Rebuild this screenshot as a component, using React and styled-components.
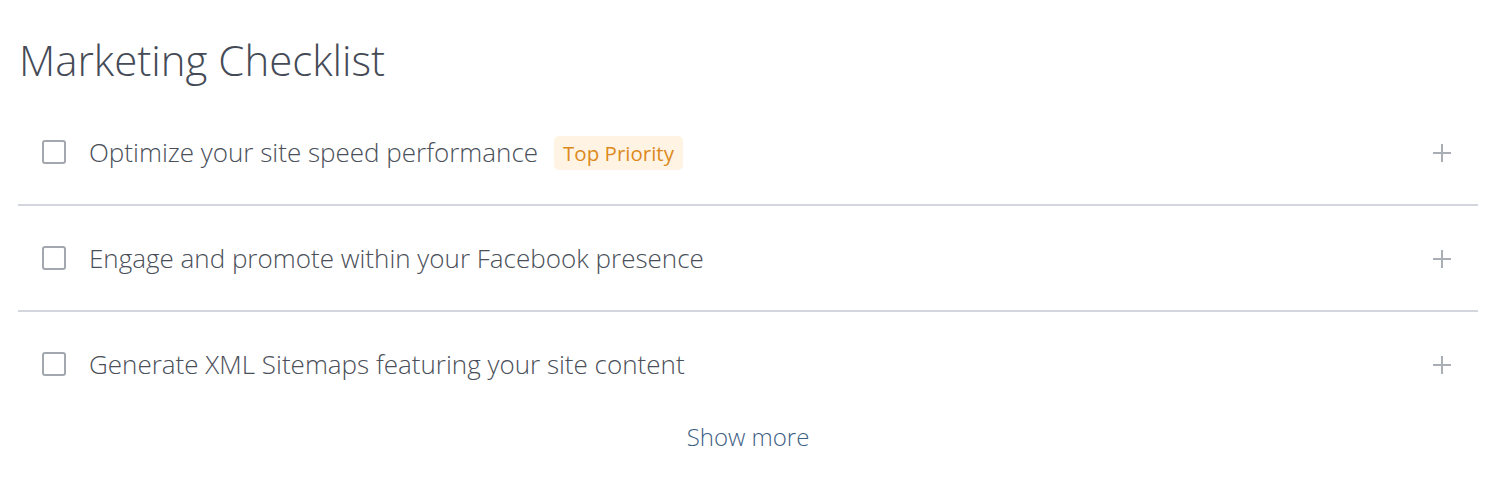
import styled, { createGlobalStyle } from "styled-components";

const items = [
  { id: 1, title: "Optimize your site speed performance", badge: "Top Priority" },
  { id: 2, title: "Engage and promote within your Facebook presence" },
  { id: 3, title: "Generate XML Sitemaps featuring your site content" },
];

export default function App() {
  return (
    <>
      <GlobalStyle />
      <Wrapper>
        <Title>Marketing Checklist</Title>
        <List>
          {items.map((item) => (
            <Row key={item.id}>
              <Checkbox type="checkbox" />
              <Label>{item.title}</Label>
              {item.badge && <Badge>{item.badge}</Badge>}
              <Plus aria-label="expand">
                <svg width="20" height="20" viewBox="0 0 20 20">
                  <path d="M10 1v18M1 10h18" stroke="#a9adb4" strokeWidth="2" />
                </svg>
              </Plus>
            </Row>
          ))}
        </List>
        <ShowMore>Show more</ShowMore>
      </Wrapper>
    </>
  );
}

const GlobalStyle = createGlobalStyle`
  body {
    margin: 0;
    background: #fff;
    font-family: "Open Sans", "Noto Sans", sans-serif;
  }
`;

const Wrapper = styled.div`
  padding: 0 18px;
`;

const Title = styled.h1`
  margin: 0;
  padding: 31px 0 0 1px;
  height: 69px;
  font-size: 42px;
  font-weight: 300;
  line-height: 57px;
  color: #454b56;
`;

const List = styled.div`
  display: flex;
  flex-direction: column;
`;

const Row = styled.div`
  display: flex;
  align-items: center;
  height: 104px;
  padding: 0 24px;
  border-bottom: 2px solid #d4d6dd;
  &:last-child {
    border-bottom: none;
  }
`;

const Checkbox = styled.input`
  appearance: none;
  margin: 0 23px 0 0;
  width: 24px;
  height: 24px;
  border: 2px solid #a3a7ae;
  border-radius: 3px;
  box-sizing: border-box;
  flex-shrink: 0;
`;

const Label = styled.div`
  font-size: 26px;
  font-weight: 300;
  line-height: 34px;
  color: #4a4f59;
`;

const Badge = styled.span`
  margin-left: 16px;
  margin-top: 1px;
  padding: 2px 9px;
  border-radius: 5px;
  background: #fff4e4;
  color: #dc8a20;
  font-size: 20.5px;
  font-weight: 400;
  line-height: 30px;
`;

const Plus = styled.div`
  display: flex;
  margin: 2px 2px 0 auto;
`;

const ShowMore = styled.div`
  text-align: center;
  margin-top: 4px;
  font-size: 24px;
  font-weight: 300;
  color: #3e5f86;
`;
